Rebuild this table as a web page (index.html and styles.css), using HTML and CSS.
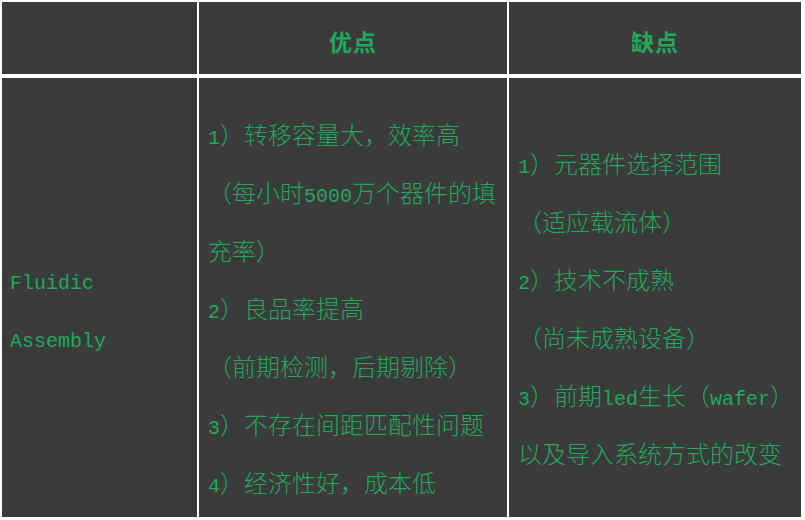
FILE: index.html
```
<!DOCTYPE html>
<html lang="zh-CN">
<head>
<meta charset="utf-8">
<title>Fluidic Assembly</title>
<link rel="stylesheet" href="styles.css">
</head>
<body>
<div class="table">
  <div class="cell head"></div>
  <div class="cell head">优点</div>
  <div class="cell head">缺点</div>
  <div class="cell body col1">
    <p><span class="lat">Fluidic</span></p>
    <p><span class="lat">Assembly</span></p>
  </div>
  <div class="cell body col2">
    <p><span class="lat">1</span>）转移容量大，效率高</p>
    <p class="wrap">（每小时<span class="lat">5000</span>万个器件的填充率）</p>
    <p><span class="lat">2</span>）良品率提高</p>
    <p>（前期检测，后期剔除）</p>
    <p><span class="lat">3</span>）不存在间距匹配性问题</p>
    <p><span class="lat">4</span>）经济性好，成本低</p>
  </div>
  <div class="cell body col3">
    <p><span class="lat">1</span>）元器件选择范围</p>
    <p>（适应载流体）</p>
    <p><span class="lat">2</span>）技术不成熟</p>
    <p>（尚未成熟设备）</p>
    <p><span class="lat">3</span>）前期<span class="lat">led</span>生长（<span class="lat">wafer</span>）</p>
    <p>以及导入系统方式的改变</p>
  </div>
</div>
</body>
</html>
```
FILE: styles.css
```
html, body {
  margin: 0;
  padding: 0;
  background: #ffffff;
}
body {
  width: 805px;
  height: 520px;
  overflow: hidden;
}
.table {
  display: grid;
  grid-template-columns: 195px 308px 292px;
  grid-template-rows: 72px 439px;
  column-gap: 2px;
  row-gap: 4px;
  padding: 2px 0 0 2px;
  font-family: "Noto Sans CJK SC", sans-serif;
  color: #1fa95c;
}
.cell {
  background: #3b3b3b;
  box-sizing: border-box;
}
.head {
  display: flex;
  align-items: center;
  justify-content: center;
  padding-top: 6px;
  font-size: 23px;
  font-weight: 700;
  letter-spacing: 1px;
}
.body {
  display: flex;
  flex-direction: column;
  justify-content: center;
  padding: 20px 4px 0 9px;
  font-size: 24px;
  font-weight: 300;
  line-height: 58px;
}
.col1 {
  padding-left: 8px;
}
.body p {
  margin: 0;
  height: 58px;
  white-space: nowrap;
}
.body p.wrap {
  height: 116px;
  white-space: normal;
}
.lat {
  font-family: "Liberation Mono", monospace;
  font-size: 20px;
  font-weight: 400;
  line-height: 20px;
}
```
